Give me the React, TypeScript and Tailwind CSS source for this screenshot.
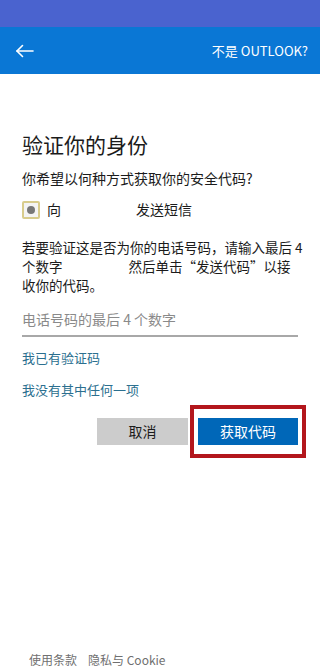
import React from 'react'

const font = { fontFamily: '"Noto Sans CJK SC", "Noto Sans", sans-serif' }

export default function App() {
  return (
    <div className="w-[320px] h-[670px] bg-white flex flex-col" style={font}>
      {/* status bar */}
      <div className="h-[27px] bg-[#4a63cf]" />

      {/* header */}
      <div className="h-[47px] bg-[#0a77d5] flex items-center justify-between pl-[15px] pr-[12px]">
        <svg width="19" height="14" viewBox="0 0 19 14" fill="none" stroke="white" strokeWidth="1.6" strokeLinecap="round">
          <path d="M18 7H2" />
          <path d="M7.5 1.5L2 7l5.5 5.5" />
        </svg>
        <span className="text-white text-[13px] leading-none">不是 OUTLOOK?</span>
      </div>

      <div className="flex flex-col px-[22px]">
        <h1 className="mt-[56px] text-[21px] leading-[28px] text-[#1b1b1b]">验证你的身份</h1>
        <p className="mt-[10px] text-[14px] leading-[20px] text-[#1b1b1b]">你希望以何种方式获取你的安全代码?</p>

        <div className="mt-[11px] flex items-center text-[14px] text-[#1b1b1b]">
          <span className="w-[18px] h-[18px] border-2 border-[#d8cc8c] rounded-[2px] flex items-center justify-center bg-[#f4f4f4]">
            <span className="w-[8px] h-[8px] rounded-full bg-[#777]" />
          </span>
          <span className="ml-[7px]">向</span>
          <span className="ml-[75px]">发送短信</span>
        </div>

        <div className="mt-[18px] flex flex-col text-[13.5px] leading-[19px] text-[#1b1b1b] whitespace-nowrap">
          <span>若要验证这是否为你的电话号码，请输入最后 4</span>
          <span className="flex">
            <span>个数字</span>
            <span className="w-[66px] shrink-0" />
            <span>然后单击“发送代码”以接</span>
          </span>
          <span>收你的代码。</span>
        </div>

        <div className="mt-[11px] border-b-2 border-[#a8a8a8] pb-[5px] w-[276px]">
          <span className="text-[14px] leading-[20px] text-[#8a8a8a]">电话号码的最后 4 个数字</span>
        </div>

        <a className="mt-[12px] text-[13px] leading-[18px] text-[#2b6f8f]">我已有验证码</a>
        <a className="mt-[14px] text-[13px] leading-[18px] text-[#2b6f8f]">我没有其中任何一项</a>

        <div className="mt-[6px] flex items-center justify-end w-[284px]">
          <button className="w-[91px] h-[27px] bg-[#cccccc] text-[14px] text-[#1b1b1b]">取消</button>
          <div className="ml-[2px] border-[4px] border-[#b3161c] px-[4px] py-[9px]">
            <button className="w-[100px] h-[27px] bg-[#0067b8] text-[14px] text-white">获取代码</button>
          </div>
        </div>
      </div>

      <div className="mt-auto mb-[2px] pl-[29px] flex gap-[11px] text-[12px] leading-[16px] text-[#707070]">
        <span>使用条款</span>
        <span>隐私与 Cookie</span>
      </div>
    </div>
  )
}
